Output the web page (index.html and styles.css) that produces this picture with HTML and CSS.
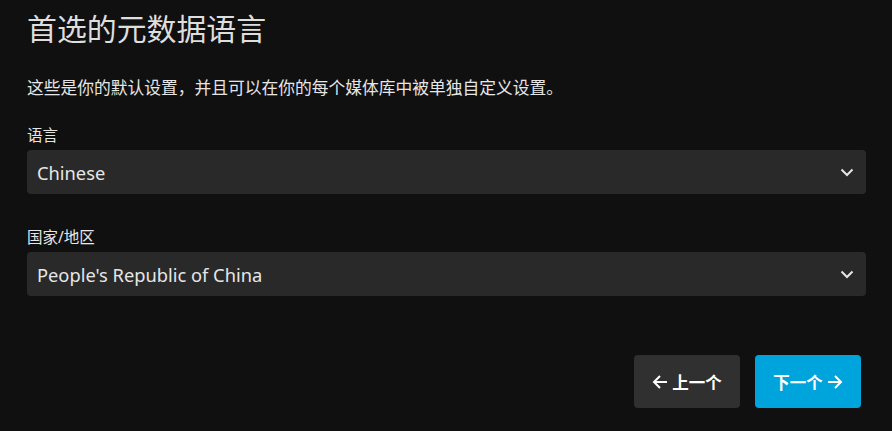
FILE: index.html
```html
<!DOCTYPE html>
<html lang="zh-CN">
<head>
<meta charset="utf-8">
<link rel="stylesheet" href="styles.css">
</head>
<body>
<div class="page">
  <h1 class="title">首选的元数据语言</h1>
  <p class="desc">这些是你的默认设置，并且可以在你的每个媒体库中被单独自定义设置。</p>
  <div class="field">
    <label class="label">语言</label>
    <div class="select">
      <span class="value">Chinese</span>
      <svg class="chev" width="14" height="9" viewBox="0 0 14 9"><path d="M1.5 1.5 L7 7 L12.5 1.5" fill="none" stroke="#e6e6e6" stroke-width="2"/></svg>
    </div>
  </div>
  <div class="field">
    <label class="label">国家/地区</label>
    <div class="select">
      <span class="value">People's Republic of China</span>
      <svg class="chev" width="14" height="9" viewBox="0 0 14 9"><path d="M1.5 1.5 L7 7 L12.5 1.5" fill="none" stroke="#e6e6e6" stroke-width="2"/></svg>
    </div>
  </div>
  <div class="actions">
    <button class="btn btn-prev"><svg width="16" height="16" viewBox="0 0 16 16"><path d="M15 8 H2 M8 2 L2 8 L8 14" fill="none" stroke="#fff" stroke-width="2"/></svg><span>上一个</span></button>
    <button class="btn btn-next"><span>下一个</span><svg width="16" height="16" viewBox="0 0 16 16"><path d="M1 8 H14 M8 2 L14 8 L8 14" fill="none" stroke="#fff" stroke-width="2"/></svg></button>
  </div>
</div>
</body>
</html>
```

FILE: styles.css
```css
html, body {
  margin: 0;
  padding: 0;
  background: #101010;
}
body {
  font-family: "Noto Sans", "Noto Sans CJK SC", sans-serif;
  color: #e0e0e0;
}
.page {
  padding: 8px 26px 0 27px;
}
.title {
  margin: 0;
  font-size: 29.9px;
  font-weight: 400;
  line-height: 42px;
  color: #dedede;
}
.desc {
  margin: 26px 0 0;
  font-size: 16.75px;
  line-height: 24px;
  color: #e6e6e6;
}
.field {
  margin-top: 24px;
  display: flex;
  flex-direction: column;
}
.field + .field {
  margin-top: 32px;
}
.label {
  font-size: 15.5px;
  line-height: 22px;
  margin-bottom: 4px;
  color: #e6e6e6;
}
.select {
  height: 44px;
  background: #292929;
  border-radius: 4px;
  display: flex;
  align-items: center;
  justify-content: space-between;
  padding: 0 12px 0 10px;
}
.value {
  font-size: 18.3px;
  color: #e6e6e6;
}
.actions {
  display: flex;
  justify-content: flex-end;
  gap: 15px;
  margin-top: 59px;
  padding-right: 5px;
}
.btn {
  width: 106px;
  height: 53px;
  border: 0;
  border-radius: 4px;
  color: #fff;
  font-family: "Noto Sans", "Noto Sans CJK SC", sans-serif;
  font-weight: 700;
  font-size: 16.5px;
  display: flex;
  align-items: center;
  justify-content: center;
  gap: 4px;
}
.btn-prev { background: #303030; }
.btn-next { background: #00a4dc; }
```
